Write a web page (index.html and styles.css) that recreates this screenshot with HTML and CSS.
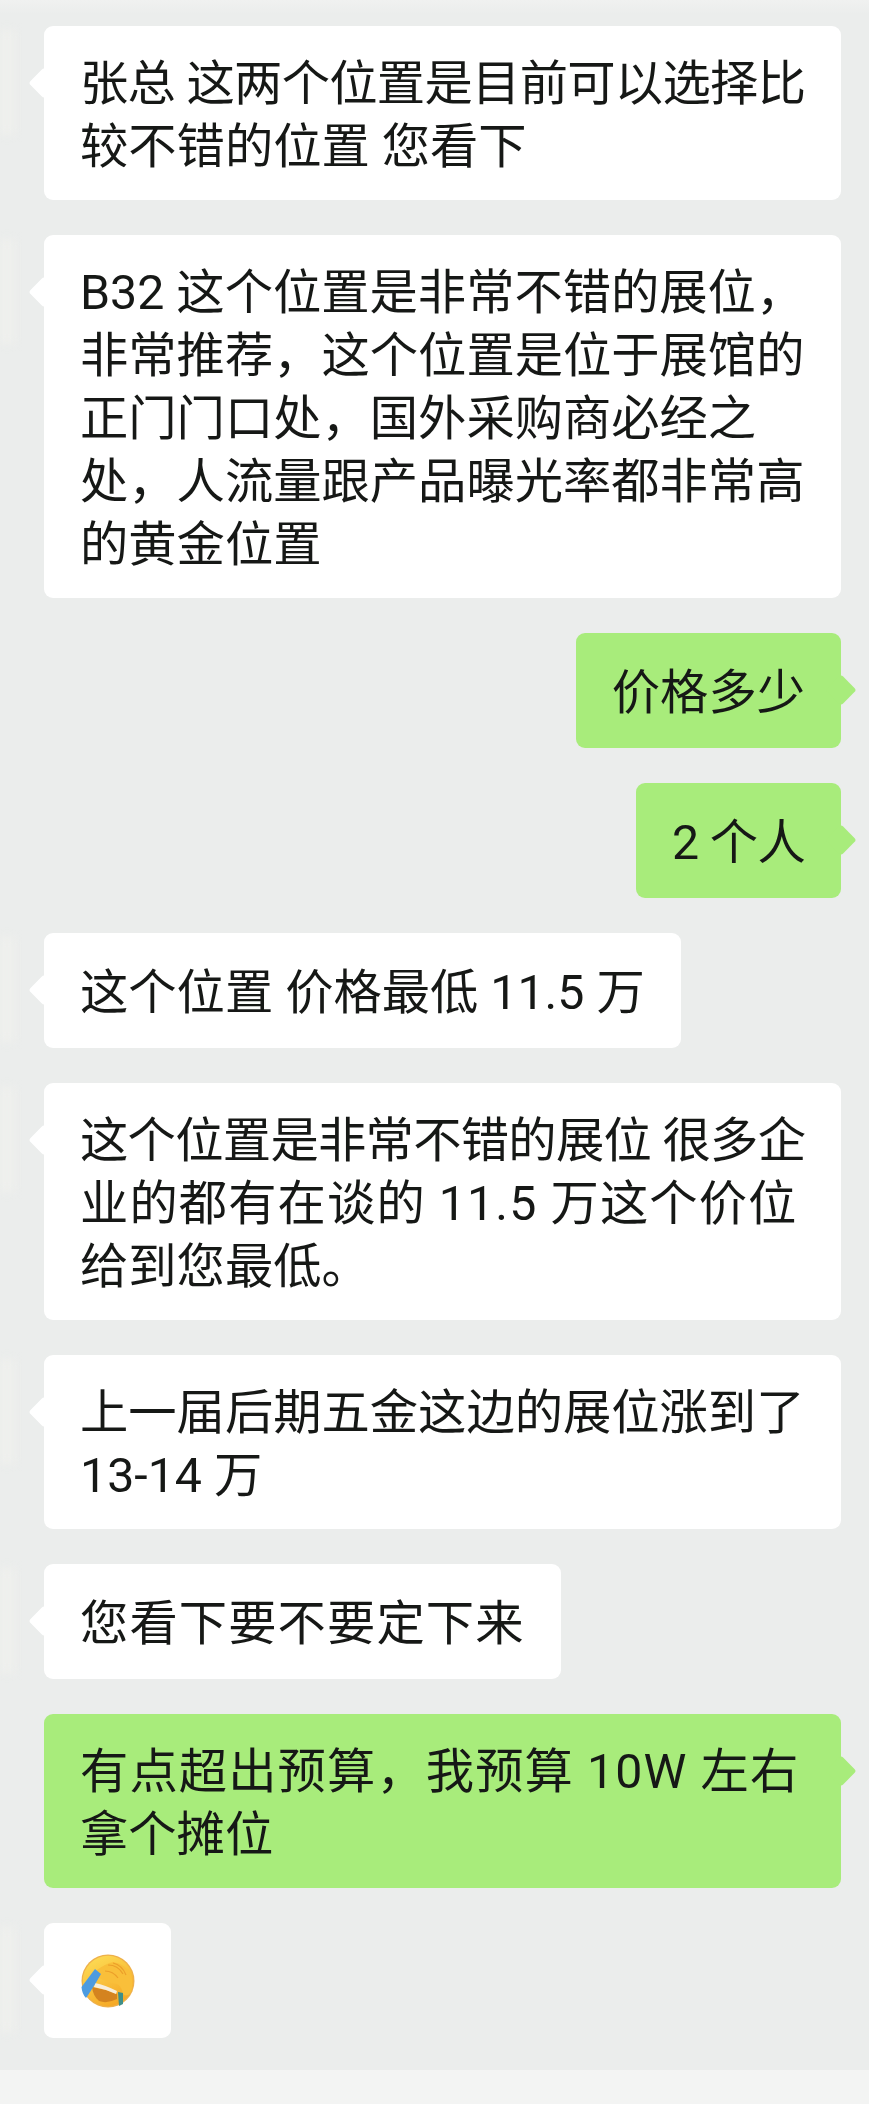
FILE: index.html
```html
<!DOCTYPE html>
<html lang="zh-CN">
<head>
    <meta charset="UTF-8">
    <meta name="viewport" content="width=device-width, initial-scale=1.0">
    <title>聊天记录</title>
    <link rel="stylesheet" href="styles.css">
</head>
<body>
    <div class="chat">
        <div class="row">
            <div class="bubble wide"><span class="narrow">张总 这两个位置是目前可以选择比</span><br>较不错的位置 您看下</div>
        </div>
        <div class="row">
            <div class="bubble wide">B32 这个位置是非常不错的展位，<br>非常推荐，这个位置是位于展馆的<br>正门门口处，国外采购商必经之<br>处，人流量跟产品曝光率都非常高<br>的黄金位置</div>
        </div>
        <div class="row me">
            <div class="bubble single">价格多少</div>
        </div>
        <div class="row me">
            <div class="bubble single narrow">2 个人</div>
        </div>
        <div class="row">
            <div class="bubble single">这个位置 价格最低 11.5 万</div>
        </div>
        <div class="row">
            <div class="bubble wide"><span class="narrow">这个位置是非常不错的展位 很多企</span><br><span class="loose">业的都有在谈的 11.5 万这个价位</span><br>给到您最低。</div>
        </div>
        <div class="row">
            <div class="bubble wide">上一届后期五金这边的展位涨到了<br>13-14 万</div>
        </div>
        <div class="row">
            <div class="bubble single loose">您看下要不要定下来</div>
        </div>
        <div class="row me">
            <div class="bubble wide"><span class="loose">有点超出预算，我预算 10W 左右</span><br>拿个摊位</div>
        </div>
        <div class="row">
            <div class="bubble single emoji-bubble">
                <svg class="emoji" viewBox="0 0 54 54" aria-hidden="true">
                    <defs>
                        <linearGradient id="face" x1="0.2" y1="0" x2="0.7" y2="1">
                            <stop offset="0" stop-color="#fddc55"/>
                            <stop offset="1" stop-color="#f5a623"/>
                        </linearGradient>
                    </defs>
                    <circle cx="27" cy="27" r="26.5" fill="#eeb04a"/>
                    <circle cx="27" cy="27" r="25.2" fill="url(#face)"/>
                    <path d="M11 33 Q24 35 36 40 L36 45 Q26 50 18 47 Q12 42 11 33Z" fill="#d4831f"/>
                    <path d="M14 29 Q24 31 36 37 L35 40 Q24 35 13 33Z" fill="#f8eeda"/>
                    <path d="M16 16 Q24 10 32 8 Q44 10 50 20 Q53 30 50 38 Q46 44 42 40 Q41 33 36 30 Q26 28 18 24Z" fill="#f9bf3a"/>
                    <path d="M27 11 Q37 11 42 20 M32 9 Q41 11 45 21 M24 17 Q32 17 37 24" fill="none" stroke="#ec9f2a" stroke-width="1.2"/>
                    <path d="M14 15 L20 20 Q12 34 5 44 Q1 40 0.5 33Z" fill="#4d9be0"/>
                    <path d="M37 38 L42 39 L42 50 L38 52Z" fill="#3f8f88"/>
                </svg>
            </div>
        </div>
    </div>
    <div class="footer"></div>
</body>
</html>
```

FILE: styles.css
```css
html, body {
    height: 100%;
}
body {
    margin: 0;
    display: flex;
    flex-direction: column;
    overflow: hidden;
    background: linear-gradient(#f0f1f0, #ebedec 14px);
    color: #161816;
    font-family: Roboto, "Noto Sans CJK SC", sans-serif;
    font-size: 48.3px;
    line-height: 63px;
}
.chat {
    display: flex;
    flex-direction: column;
    gap: 35px;
    padding: 26px 28px 32px 44px;
}
.row {
    position: relative;
    display: flex;
}
/* faint smear where the avatars were blurred out */
.row:not(.me)::before {
    content: "";
    position: absolute;
    top: 4px;
    left: -44px;
    width: 14px;
    height: 105px;
    background: #eff0ed;
    filter: blur(4px);
}
.row.me {
    justify-content: flex-end;
}
.bubble {
    position: relative;
    padding: 26px 36px 22px;
    background: #fff;
    border-radius: 9px;
    white-space: nowrap;
}
.bubble::before {
    content: "";
    position: absolute;
    top: 46px;
    left: -11px;
    width: 22px;
    height: 22px;
    background: inherit;
    border-radius: 3px;
    transform: rotate(45deg);
}
.me .bubble {
    background: #a8ec7b;
}
.me .bubble::before {
    left: auto;
    right: -11px;
}
.wide {
    width: 797px;
    box-sizing: border-box;
}
.single {
    padding-top: 28px;
    padding-bottom: 24px;
}
.narrow {
    letter-spacing: -0.7px;
}
.loose {
    letter-spacing: 1.1px;
}
.emoji-bubble {
    display: flex;
    align-items: center;
    justify-content: center;
    width: 127px;
    height: 115px;
    padding: 0;
    box-sizing: border-box;
}
.emoji {
    position: relative;
    width: 54px;
    height: 54px;
    filter: blur(0.4px);
}
.footer {
    flex: 1;
    background: #f3f4f3;
}
```
